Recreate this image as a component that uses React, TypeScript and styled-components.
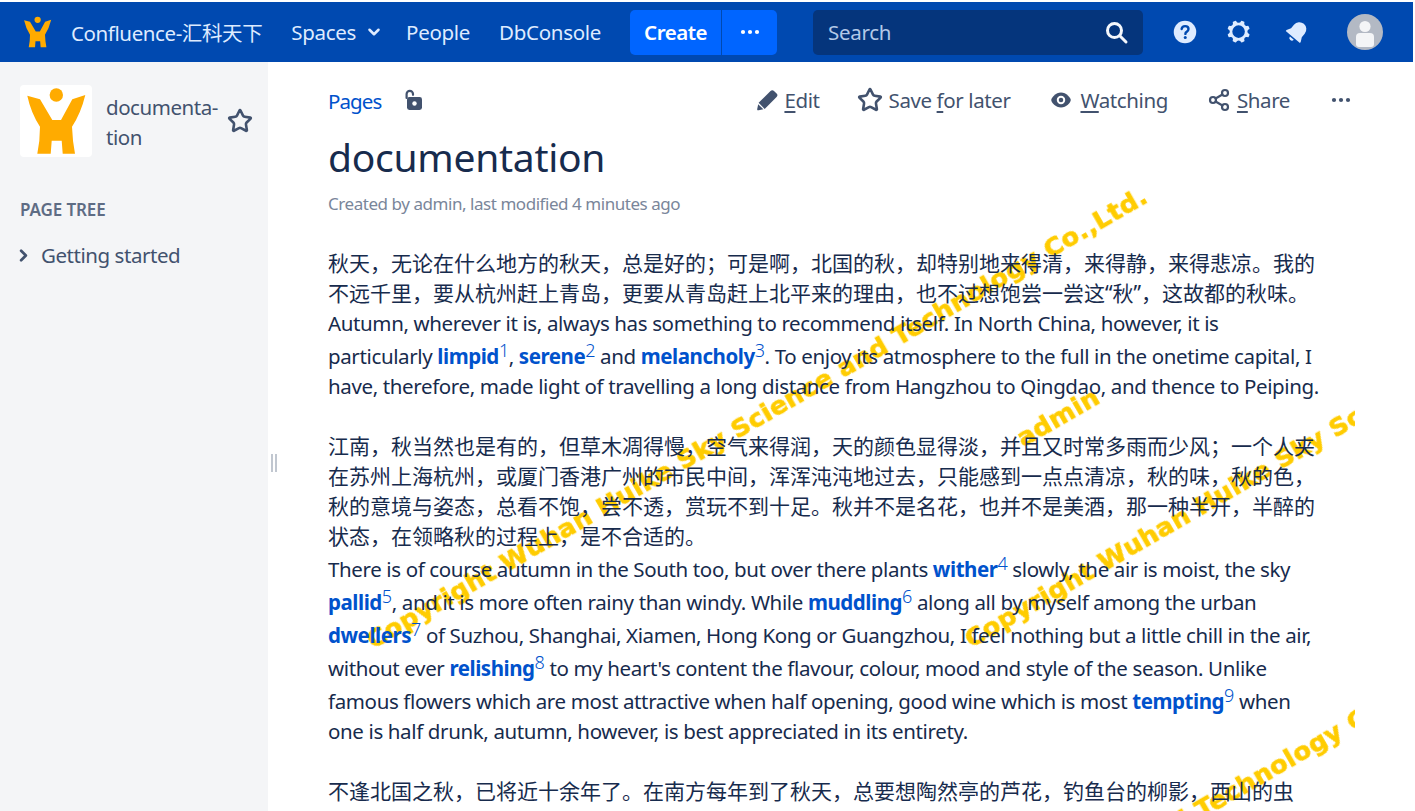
import React from "react";
import styled, { createGlobalStyle } from "styled-components";
import { Star, Share2, ChevronDown, ChevronRight } from "lucide-react";

const Global = createGlobalStyle`
  html, body { margin: 0; padding: 0; background: #fff; height: 100%; overflow: hidden; }
  body { font-family: "Noto Sans", "Noto Sans CJK SC", sans-serif; color: #172b4d; }
  * { box-sizing: border-box; }
`;

const Page = styled.div`
  width: 1415px; height: 811px; padding-top: 2px; display: flex; flex-direction: column; overflow: hidden;
`;
const TopBar = styled.header`
  height: 60px; width: 1413px; flex: none; background: #0049b0; display: flex; align-items: center;
  padding-left: 23px; color: #deebff;
`;
const Brand = styled.div`
  display: flex; align-items: center; gap: 19px; font-size: 20.5px; letter-spacing: -0.4px; margin-right: 29px;
`;
const NavItem = styled.div<{ $after: number }>`
  display: flex; align-items: center; gap: 9px; font-size: 20.5px; letter-spacing: -0.3px; margin-right: ${(p) => p.$after}px;
`;
const CreateGroup = styled.div`
  display: flex; height: 45px; width: 147px; border-radius: 5px; overflow: hidden; background: #0065ff;
  color: #fff; margin-right: 36px;
`;
const CreateButton = styled.div`
  width: 92px; display: flex; align-items: center; justify-content: center; font-size: 20.5px; font-weight: 600;
  letter-spacing: -0.45px; border-right: 1px solid #0049b0;
`;
const MoreButton = styled.div`
  flex: 1; display: flex; align-items: center; justify-content: center;
`;
const SearchBox = styled.div`
  width: 330px; height: 45px; border-radius: 5px; background: #05357c; display: flex; align-items: center;
  justify-content: space-between; padding: 0 14px 0 15px; margin-right: 27px; color: #b3c9e8; font-size: 20.5px; letter-spacing: -0.3px;
`;
const TopIcons = styled.div`
  display: flex; align-items: center; gap: 24px; color: #deebff;
  svg:last-child { margin-left: 4px; }
`;
const Avatar = styled.div`
  width: 36px; height: 36px; border-radius: 50%; background: #b3b9c4; margin-left: 35px; display: flex; overflow: hidden;
`;

const Body = styled.div`
  flex: 1; display: flex; min-height: 0;
`;
const Sidebar = styled.aside`
  width: 268px; flex: none; background: #f4f5f7; padding: 23px 0 0 20px; color: #42526e;
`;
const SpaceHead = styled.div`
  display: flex; align-items: center;
`;
const SpaceLogo = styled.div`
  width: 72px; height: 72px; background: #fff; border-radius: 4px; flex: none; display: flex;
`;
const SpaceName = styled.div`
  width: 136px; padding: 2px 0 0 14px; font-size: 20.5px; line-height: 30px; letter-spacing: -0.45px;
`;
const SpaceStar = styled.div`
  display: flex; margin-left: -1px;
`;
const TreeTitle = styled.div`
  margin-top: 41px; font-size: 17px; line-height: 24px; font-weight: 600; color: #5e6c84; letter-spacing: -0.1px;
`;
const TreeRow = styled.div`
  margin-top: 19px; display: flex; align-items: center; gap: 8px; font-size: 20.5px; line-height: 28px; letter-spacing: -0.45px;
  margin-left: -6px;
`;
const Handle = styled.div`
  position: absolute; left: 3px; top: 392px; width: 6px; height: 18px; border-left: 2px solid #c1c7d0; border-right: 2px solid #c1c7d0;
`;

const Main = styled.main`
  position: relative; flex: 1; min-width: 0; overflow: hidden;
`;
const MarkLayer = styled.div`
  position: absolute; left: 0; top: 0; right: 60px; bottom: 0; overflow: hidden;
`;
const Mark = styled.span<{ $x: number; $y: number }>`
  position: absolute; left: ${(p) => p.$x}px; top: ${(p) => p.$y}px; white-space: nowrap;
  transform-origin: 0 100%; transform: rotate(-30deg);
  font-family: "DejaVu Sans", sans-serif; font-weight: 700; font-size: 25.5px; line-height: 26px; letter-spacing: 0.4px;
  color: #ffcc00; -webkit-text-stroke: 0.7px #ffcc00; filter: blur(0.7px);
`;
const Content = styled.div`
  position: relative; padding: 21px 0 0 60px; width: 1085px;
`;
const Toolbar = styled.div`
  display: flex; align-items: center; height: 36px;
`;
const PagesLink = styled.a`
  color: #0052cc; font-size: 20.5px; letter-spacing: -0.9px;
`;
const LockWrap = styled.div`
  display: flex; margin-left: 22px; margin-bottom: 2px;
`;
const Actions = styled.div`
  margin-left: auto; display: flex; align-items: center; color: #42526e; font-size: 20.5px; letter-spacing: -0.4px; margin-bottom: 2px;
`;
const Action = styled.div<{ $gap: number }>`
  display: flex; align-items: center; gap: 6px; margin-left: ${(p) => p.$gap}px;
  svg { flex: none; }
  u { text-underline-offset: 3px; }
`;
const Title = styled.h1`
  margin: 15px 0 0; font-size: 39px; line-height: 46px; font-weight: 400; letter-spacing: -0.28px; color: #172b4d;
`;
const Meta = styled.div`
  margin-top: 12px; font-size: 17px; line-height: 24px; color: #7a869a; letter-spacing: -0.45px;
`;
const Article = styled.article`
  margin-top: 32px; line-height: 30px; white-space: nowrap;
`;
const Cjk = styled.div`
  font-size: 21px; font-weight: 400;
`;
const English = styled.div`
  font-size: 20.5px; letter-spacing: -0.37px;
`;
const Gap = styled.div`
  height: 30px;
`;
const Term = styled.strong`
  color: #0052cc; font-weight: 700; letter-spacing: -0.45px;
`;
const Note = styled.sup`
  color: #0052cc; font-size: 18px; line-height: 25px; vertical-align: 7px; font-weight: 300; letter-spacing: -0.4px;
`;

const LogoFigure: React.FC<{ w: number; h: number; box: string }> = ({ w, h, box }) => (
  <svg width={w} height={h} viewBox={box} fill="#ffab00">
    <circle cx="36.3" cy="10" r="6.7" />
    <path d="M7.3 10.7 L20 14.3 L32.3 35 L41 35 L52.3 14.3 L65.3 10 Q61 28 52 41.7 Q52.5 56 55 68.7 L42.7 68.7 L41.7 55.7 L31.7 55.7 L30.7 68.7 L17.3 68.7 Q20 56 20 41.7 Q11 28 7.3 10.7 Z" />
  </svg>
);
const Dots: React.FC = () => (
  <svg width="24" height="24" viewBox="0 0 24 24" fill="currentColor">
    <circle cx="5" cy="12" r="2.1" /><circle cx="12" cy="12" r="2.1" /><circle cx="19" cy="12" r="2.1" />
  </svg>
);
const SearchIcon = () => (
  <svg width="26" height="26" viewBox="0 0 26 26" fill="none" stroke="#f4f7fc" strokeWidth="3" strokeLinecap="round">
    <circle cx="11.5" cy="11.5" r="7" />
    <path d="M17 17l6 6" />
  </svg>
);
const HelpIcon = () => (
  <svg width="30" height="30" viewBox="0 0 24 24">
    <circle cx="12" cy="12" r="9" fill="#deebff" />
    <path d="M9.3 9.6c.2-1.5 1.3-2.3 2.8-2.3 1.6 0 2.7 1 2.7 2.3 0 1.2-.7 1.8-1.5 2.3-.7.4-1 .8-1 1.6" fill="none" stroke="#0049b0" strokeWidth="1.9" strokeLinecap="round" />
    <circle cx="12.2" cy="16.3" r="1.2" fill="#0049b0" />
  </svg>
);
const GearIcon = () => (
  <svg width="30" height="30" viewBox="0 0 24 24" fill="#deebff">
    <path fillRule="evenodd" d="M11.701 16.7a5.002 5.002 0 110-10.003 5.002 5.002 0 010 10.004m8.368-3.117a1.995 1.995 0 01-1.346-1.885c0-.876.563-1.613 1.345-1.885a.48.48 0 00.315-.574 8.947 8.947 0 00-.836-1.993.477.477 0 00-.598-.195 2.04 2.04 0 01-1.29.08 1.988 1.988 0 01-1.404-1.395 2.04 2.04 0 01.076-1.297.478.478 0 00-.196-.597 8.98 8.98 0 00-1.975-.826.479.479 0 00-.574.314 1.995 1.995 0 01-1.885 1.346 1.994 1.994 0 01-1.884-1.345.482.482 0 00-.575-.315c-.708.2-1.379.485-2.004.842a.47.47 0 00-.198.582A2.002 2.002 0 014.445 7.06a.478.478 0 00-.595.196 8.946 8.946 0 00-.833 1.994.48.48 0 00.308.572 1.995 1.995 0 011.323 1.877c0 .867-.552 1.599-1.324 1.877a.479.479 0 00-.308.57 8.99 8.99 0 00.723 1.79.477.477 0 00.624.194c.595-.273 1.343-.264 2.104.238.117.077.225.185.302.3.527.8.512 1.58.198 2.188a.473.473 0 00.168.628 8.946 8.946 0 002.11.897.474.474 0 00.57-.313 1.995 1.995 0 011.886-1.353c.878 0 1.618.567 1.887 1.353a.475.475 0 00.57.313 8.964 8.964 0 002.084-.883.473.473 0 00.167-.631c-.318-.608-.337-1.393.191-2.195.077-.116.185-.225.302-.302.772-.511 1.527-.513 2.125-.23a.477.477 0 00.628-.19 8.925 8.925 0 00.728-1.793.478.478 0 00-.314-.573" />
  </svg>
);
const BellIcon = () => (
  <svg width="30" height="30" viewBox="0 0 24 24" fill="#deebff">
    <g transform="rotate(40 12 12)">
      <path d="M12 3.5a5.6 5.6 0 0 0-5.6 5.6v3.6L4.6 16.2v1h14.8v-1l-1.8-3.5V9.1A5.6 5.6 0 0 0 12 3.5z" />
      <path d="M10 18.4h4a2 2 0 0 1-4 0z" />
    </g>
  </svg>
);
const AvatarFigure = () => (
  <svg width="36" height="36" viewBox="0 0 36 36">
    <circle cx="18" cy="12.5" r="5.6" fill="#f4f5f7" />
    <path d="M9 23a4 4 0 0 1 4-4h10a4 4 0 0 1 4 4v7a3 3 0 0 1-3 3H12a3 3 0 0 1-3-3z" fill="#f4f5f7" />
  </svg>
);
const LockIcon = () => (
  <svg width="22" height="24" viewBox="0 0 22 24">
    <path d="M3.6 10V6a3.2 3.2 0 0 1 6.4 0v.8" fill="none" stroke="#42526e" strokeWidth="2.2" strokeLinecap="round" />
    <rect x="4" y="9" width="15" height="13" rx="2.4" fill="#42526e" />
    <circle cx="11.5" cy="15.5" r="2.2" fill="#fff" />
  </svg>
);
const EditIcon = () => (
  <svg width="22" height="22" viewBox="3 3 18 18" fill="#42526e">
    <path d="M4.02 19.23a1 1 0 001.18 1.18l3.81-.78-4.21-4.21-.78 3.81zM19.844 6.707l-2.12-2.122A1.997 1.997 0 0016.308 4c-.512 0-1.024.195-1.415.585l-9.757 9.758 4.95 4.95 9.757-9.758a2 2 0 000-2.828z" />
  </svg>
);
const EyeIcon = () => (
  <svg width="26" height="26" viewBox="0 0 24 24">
    <path d="M12 19c-4.9 0-9-4.9-9-7s4.1-7 9-7 9 4.9 9 7-4.1 7-9 7z" fill="#42526e" />
    <circle cx="12" cy="12" r="3.9" fill="#fff" />
    <circle cx="12" cy="12" r="2.1" fill="#42526e" />
  </svg>
);

const WATERMARK = "Copyright Wuhan Huike Sky Science and Technology Co.,Ltd.";

const App: React.FC = () => (
  <Page>
    <Global />
    <TopBar>
      <Brand>
        <LogoFigure w={29} h={32} box="5 2 62 68" />
        <span>Confluence-汇科天下</span>
      </Brand>
      <NavItem $after={23}>Spaces <ChevronDown size={18} strokeWidth={3.4} /></NavItem>
      <NavItem $after={29}>People</NavItem>
      <NavItem $after={29}>DbConsole</NavItem>
      <CreateGroup>
        <CreateButton>Create</CreateButton>
        <MoreButton><Dots /></MoreButton>
      </CreateGroup>
      <SearchBox>
        <span>Search</span>
        <SearchIcon />
      </SearchBox>
      <TopIcons>
        <HelpIcon />
        <GearIcon />
        <BellIcon />
      </TopIcons>
      <Avatar><AvatarFigure /></Avatar>
    </TopBar>
    <Body>
      <Sidebar>
        <SpaceHead>
          <SpaceLogo><LogoFigure w={72} h={72} box="0 0 72 72" /></SpaceLogo>
          <SpaceName>documenta-<br />tion</SpaceName>
          <SpaceStar><Star size={26} strokeWidth={2.4} /></SpaceStar>
        </SpaceHead>
        <TreeTitle>PAGE TREE</TreeTitle>
        <TreeRow><ChevronRight size={19} strokeWidth={3.4} />Getting started</TreeRow>
      </Sidebar>
      <Main>
        <Handle />
        <MarkLayer>
          <Mark $x={107} $y={565}>{WATERMARK}</Mark>
          <Mark $x={757} $y={363}>admin</Mark>
          <Mark $x={705} $y={564}>{WATERMARK}</Mark>
          <Mark $x={410} $y={1038}>{WATERMARK}</Mark>
        </MarkLayer>
        <Content>
          <Toolbar>
            <PagesLink>Pages</PagesLink>
            <LockWrap><LockIcon /></LockWrap>
            <Actions>
              <Action $gap={0}><EditIcon /><span><u>E</u>dit</span></Action>
              <Action $gap={37}><Star size={26} strokeWidth={2.4} /><span>Save <u>f</u>or later</span></Action>
              <Action $gap={38}><EyeIcon /><span><u>W</u>atching</span></Action>
              <Action $gap={39}><Share2 size={24} strokeWidth={2.2} /><span><u>S</u>hare</span></Action>
              <Action $gap={39}><Dots /></Action>
            </Actions>
          </Toolbar>
          <Title>documentation</Title>
          <Meta>Created by admin, last modified 4 minutes ago</Meta>
          <Article>
            <Cjk>秋天，无论在什么地方的秋天，总是好的；可是啊，北国的秋，却特别地来得清，来得静，来得悲凉。我的<br />不远千里，要从杭州赶上青岛，更要从青岛赶上北平来的理由，也不过想饱尝一尝这“秋”，这故都的秋味。</Cjk>
            <English>
              Autumn, wherever it is, always has something to recommend itself. In North China, however, it is<br />
              particularly <Term>limpid</Term><Note>1</Note>, <Term>serene</Term><Note>2</Note> and <Term>melancholy</Term><Note>3</Note>. To enjoy its atmosphere to the full in the onetime capital, I<br />
              have, therefore, made light of travelling a long distance from Hangzhou to Qingdao, and thence to Peiping.
            </English>
            <Gap />
            <Cjk>江南，秋当然也是有的，但草木凋得慢，空气来得润，天的颜色显得淡，并且又时常多雨而少风；一个人夹<br />在苏州上海杭州，或厦门香港广州的市民中间，浑浑沌沌地过去，只能感到一点点清凉，秋的味，秋的色，<br />秋的意境与姿态，总看不饱，尝不透，赏玩不到十足。秋并不是名花，也并不是美酒，那一种半开，半醉的<br />状态，在领略秋的过程上，是不合适的。</Cjk>
            <English>
              There is of course autumn in the South too, but over there plants <Term>wither</Term><Note>4</Note> slowly, the air is moist, the sky<br />
              <Term>pallid</Term><Note>5</Note>, and it is more often rainy than windy. While <Term>muddling</Term><Note>6</Note> along all by myself among the urban<br />
              <Term>dwellers</Term><Note>7</Note> of Suzhou, Shanghai, Xiamen, Hong Kong or Guangzhou, I feel nothing but a little chill in the air,<br />
              without ever <Term>relishing</Term><Note>8</Note> to my heart's content the flavour, colour, mood and style of the season. Unlike<br />
              famous flowers which are most attractive when half opening, good wine which is most <Term>tempting</Term><Note>9</Note> when<br />
              one is half drunk, autumn, however, is best appreciated in its entirety.
            </English>
            <Gap />
            <Cjk>不逢北国之秋，已将近十余年了。在南方每年到了秋天，总要想陶然亭的芦花，钓鱼台的柳影，西山的虫</Cjk>
          </Article>
        </Content>
      </Main>
    </Body>
  </Page>
);

export default App;
